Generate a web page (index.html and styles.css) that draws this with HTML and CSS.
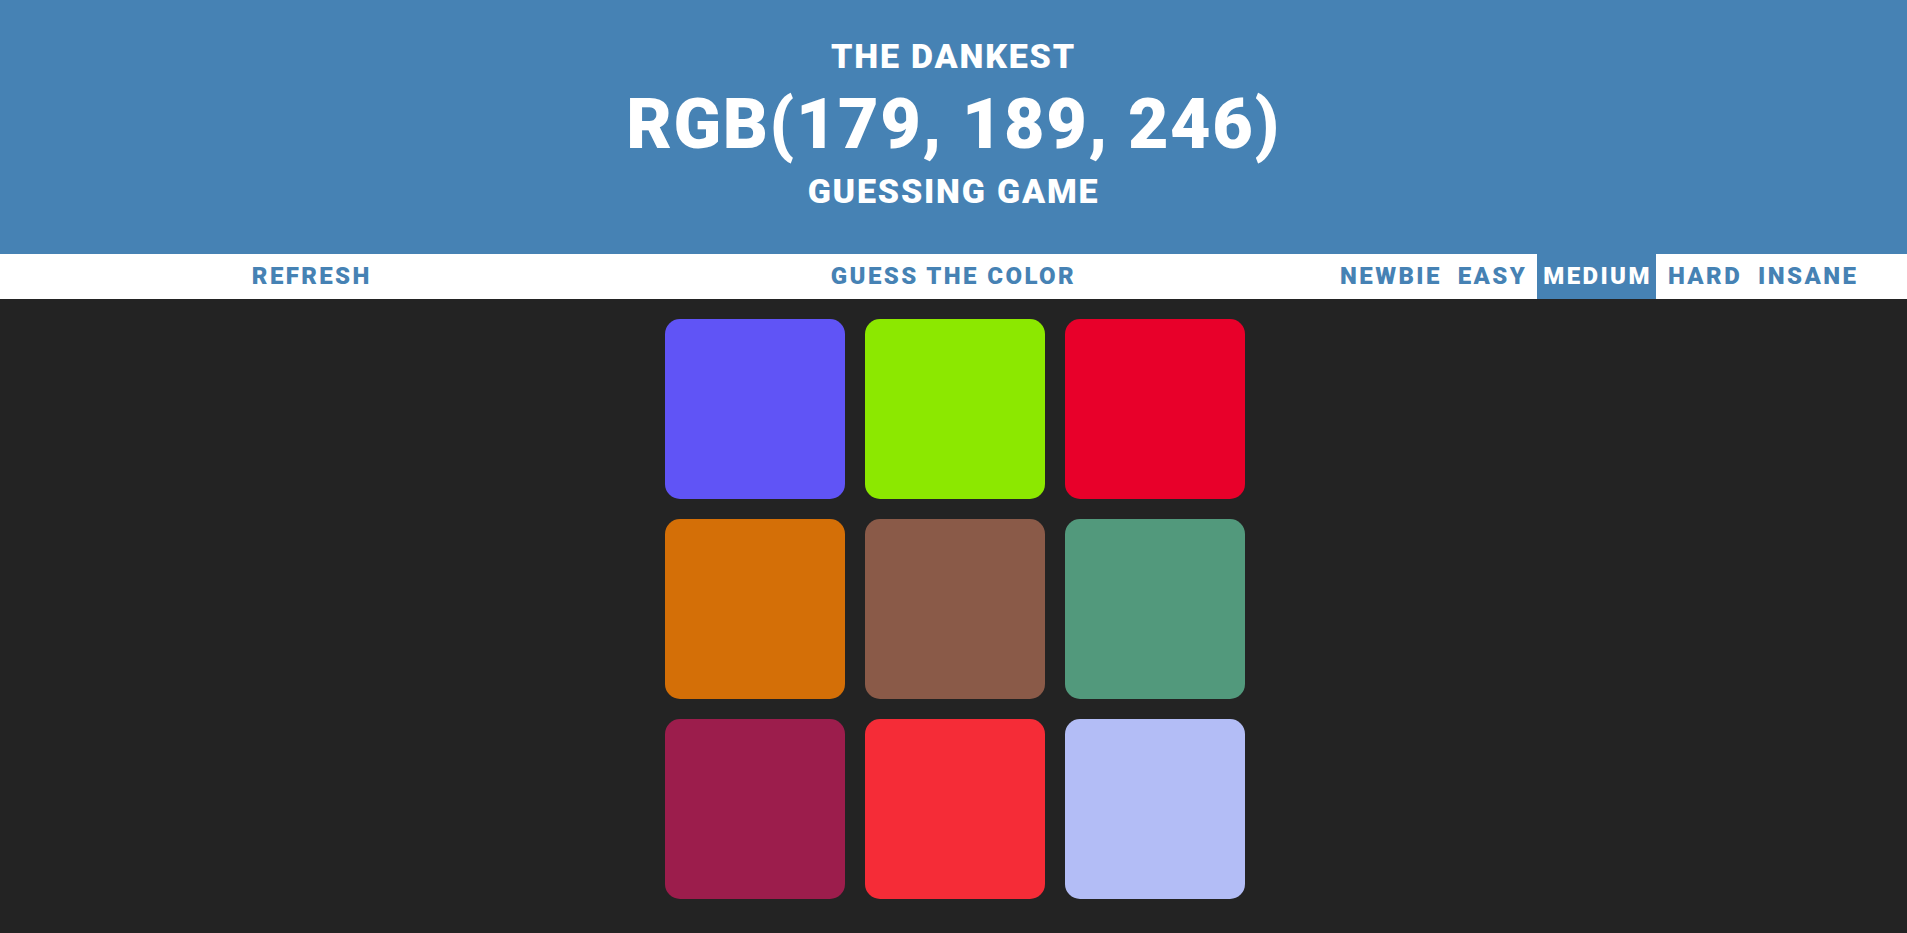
FILE: index.html
```html
<!DOCTYPE html>
<html lang="en">
<head>
<meta charset="utf-8">
<title>Color Guessing Game</title>
<link rel="stylesheet" href="styles.css">
</head>
<body>
<header class="header">
  <h1 class="title">
    <span class="title-small">THE DANKEST</span>
    <span class="title-big">RGB(179, 189, 246)</span>
    <span class="title-small title-last">GUESSING GAME</span>
  </h1>
</header>
<nav class="nav">
  <div class="nav-col nav-left"><button class="btn">REFRESH</button></div>
  <div class="nav-col nav-mid"><span class="message">GUESS THE COLOR</span></div>
  <div class="nav-col nav-right">
    <button class="btn">NEWBIE</button>
    <button class="btn">EASY</button>
    <button class="btn selected">MEDIUM</button>
    <button class="btn">HARD</button>
    <button class="btn">INSANE</button>
  </div>
</nav>
<main class="grid">
  <div class="square c1"></div>
  <div class="square c2"></div>
  <div class="square c3"></div>
  <div class="square c4"></div>
  <div class="square c5"></div>
  <div class="square c6"></div>
  <div class="square c7"></div>
  <div class="square c8"></div>
  <div class="square c9"></div>
</main>
</body>
</html>
```
FILE: styles.css
```css
html, body {
  margin: 0;
  padding: 0;
  background: #232323;
  font-family: Roboto, "Liberation Sans", sans-serif;
}

.header {
  background: #4682b4;
  color: #fff;
  text-align: center;
  padding: 36px 0 43px;
}

.title {
  margin: 0;
  font-weight: 900;
  letter-spacing: 1.8px;
}

.title-small {
  display: block;
  font-size: 34px;
  line-height: 40px;
}

.title-last {
  line-height: 39px;
}

.title-big {
  display: block;
  font-size: 70px;
  line-height: 96px;
  letter-spacing: 1.6px;
}

.nav {
  background: #fff;
  height: 45px;
  display: grid;
  grid-template-columns: 1fr 1fr 1fr;
  color: #4682b4;
  font-weight: 900;
  font-size: 24px;
  letter-spacing: 2.4px;
}

.nav-col {
  display: flex;
  justify-content: center;
  align-items: stretch;
}

.nav-left {
  padding-right: 14px;
}

.nav-right {
  padding-left: 18px;
  gap: 6px;
}

.btn {
  border: none;
  background: none;
  color: #4682b4;
  font: inherit;
  letter-spacing: inherit;
  padding: 0 4px 0 6px;
  margin: 0;
  line-height: 45px;
  cursor: pointer;
}

.btn.selected {
  background: #4682b4;
  color: #fff;
}

.message {
  line-height: 45px;
}

.grid {
  width: 580px;
  margin: 20px auto 0;
  padding-left: 3px;
  display: grid;
  grid-template-columns: repeat(3, 180px);
  gap: 20px;
}

.square {
  width: 180px;
  height: 180px;
  border-radius: 15px;
}

.c1 { background: #6054f6; }
.c2 { background: #8ce800; }
.c3 { background: #e8002a; }
.c4 { background: #d46f07; }
.c5 { background: #8a5a48; }
.c6 { background: #52997c; }
.c7 { background: #9c1d4c; }
.c8 { background: #f52c37; }
.c9 { background: #b3bdf6; }
```
